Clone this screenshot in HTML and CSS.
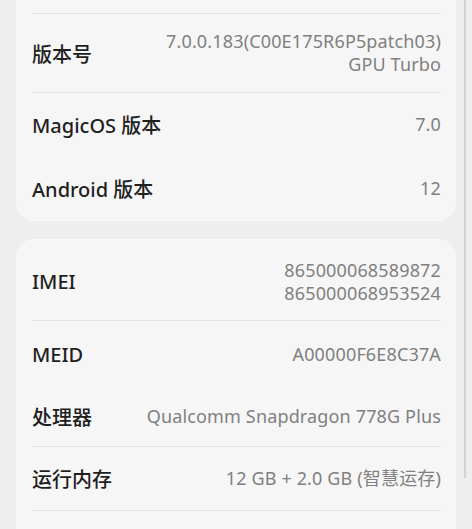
FILE: index.html
```html
<!doctype html>
<html>
<head>
<meta charset="utf-8">
<title>关于手机</title>
<link rel="stylesheet" href="styles.css">
</head>
<body>
<div class="page">
	<div class="card cut">
		<div class="row line">
			<div class="label">版本号</div>
			<div class="value">7.0.0.183(C00E175R6P5patch03)<br>GPU Turbo</div>
		</div>
		<div class="row">
			<div class="label">MagicOS 版本</div>
			<div class="value">7.0</div>
		</div>
		<div class="row last">
			<div class="label">Android 版本</div>
			<div class="value">12</div>
		</div>
	</div>
	<div class="card">
		<div class="row tall">
			<div class="label">IMEI</div>
			<div class="value">865000068589872<br>865000068953524</div>
		</div>
		<div class="row mid">
			<div class="label">MEID</div>
			<div class="value">A00000F6E8C37A</div>
		</div>
		<div class="row line">
			<div class="label">处理器</div>
			<div class="value">Qualcomm Snapdragon 778G Plus</div>
		</div>
		<div class="row line ram">
			<div class="label">运行内存</div>
			<div class="value">12 GB + 2.0 GB (智慧运存)</div>
		</div>
		<div class="row"></div>
	</div>
</div>
<div class="scroll"></div>
</body>
</html>
```

FILE: styles.css
```css
*{margin:0;padding:0;box-sizing:border-box;}
html,body{height:100%;overflow:hidden;}
body{background:#eeeeee;font-family:"Noto Sans","Noto Sans CJK SC",sans-serif;}
.page{padding:0 16px;}
.card{background:#f6f6f6;border-radius:18px;padding:0 15px 0 16px;margin-bottom:18px;}
.card.cut{border-top-left-radius:0;border-top-right-radius:0;padding-top:13px;}
.card.cut .row:first-child{border-top:1px solid #e3e3e3;}
.row{display:flex;align-items:center;justify-content:space-between;min-height:63px;gap:12px;}
.row.line{border-bottom:1px solid #e3e3e3;min-height:60px;}
.row.ram{min-height:64px;}
.row.last{min-height:65px;}
.row.mid{min-height:66px;}
.row.tall{min-height:82px;padding-top:4px;border-bottom:1px solid #e3e3e3;}
.card.cut .row.line{min-height:80px;}
.label{font-size:20px;font-weight:500;color:#1f1f1f;white-space:nowrap;}
.value{font-size:18px;color:#808080;text-align:right;line-height:23px;letter-spacing:0.15px;}
.scroll{position:fixed;top:0;left:464px;width:2px;height:478px;background:#d2d2d2;}
```
